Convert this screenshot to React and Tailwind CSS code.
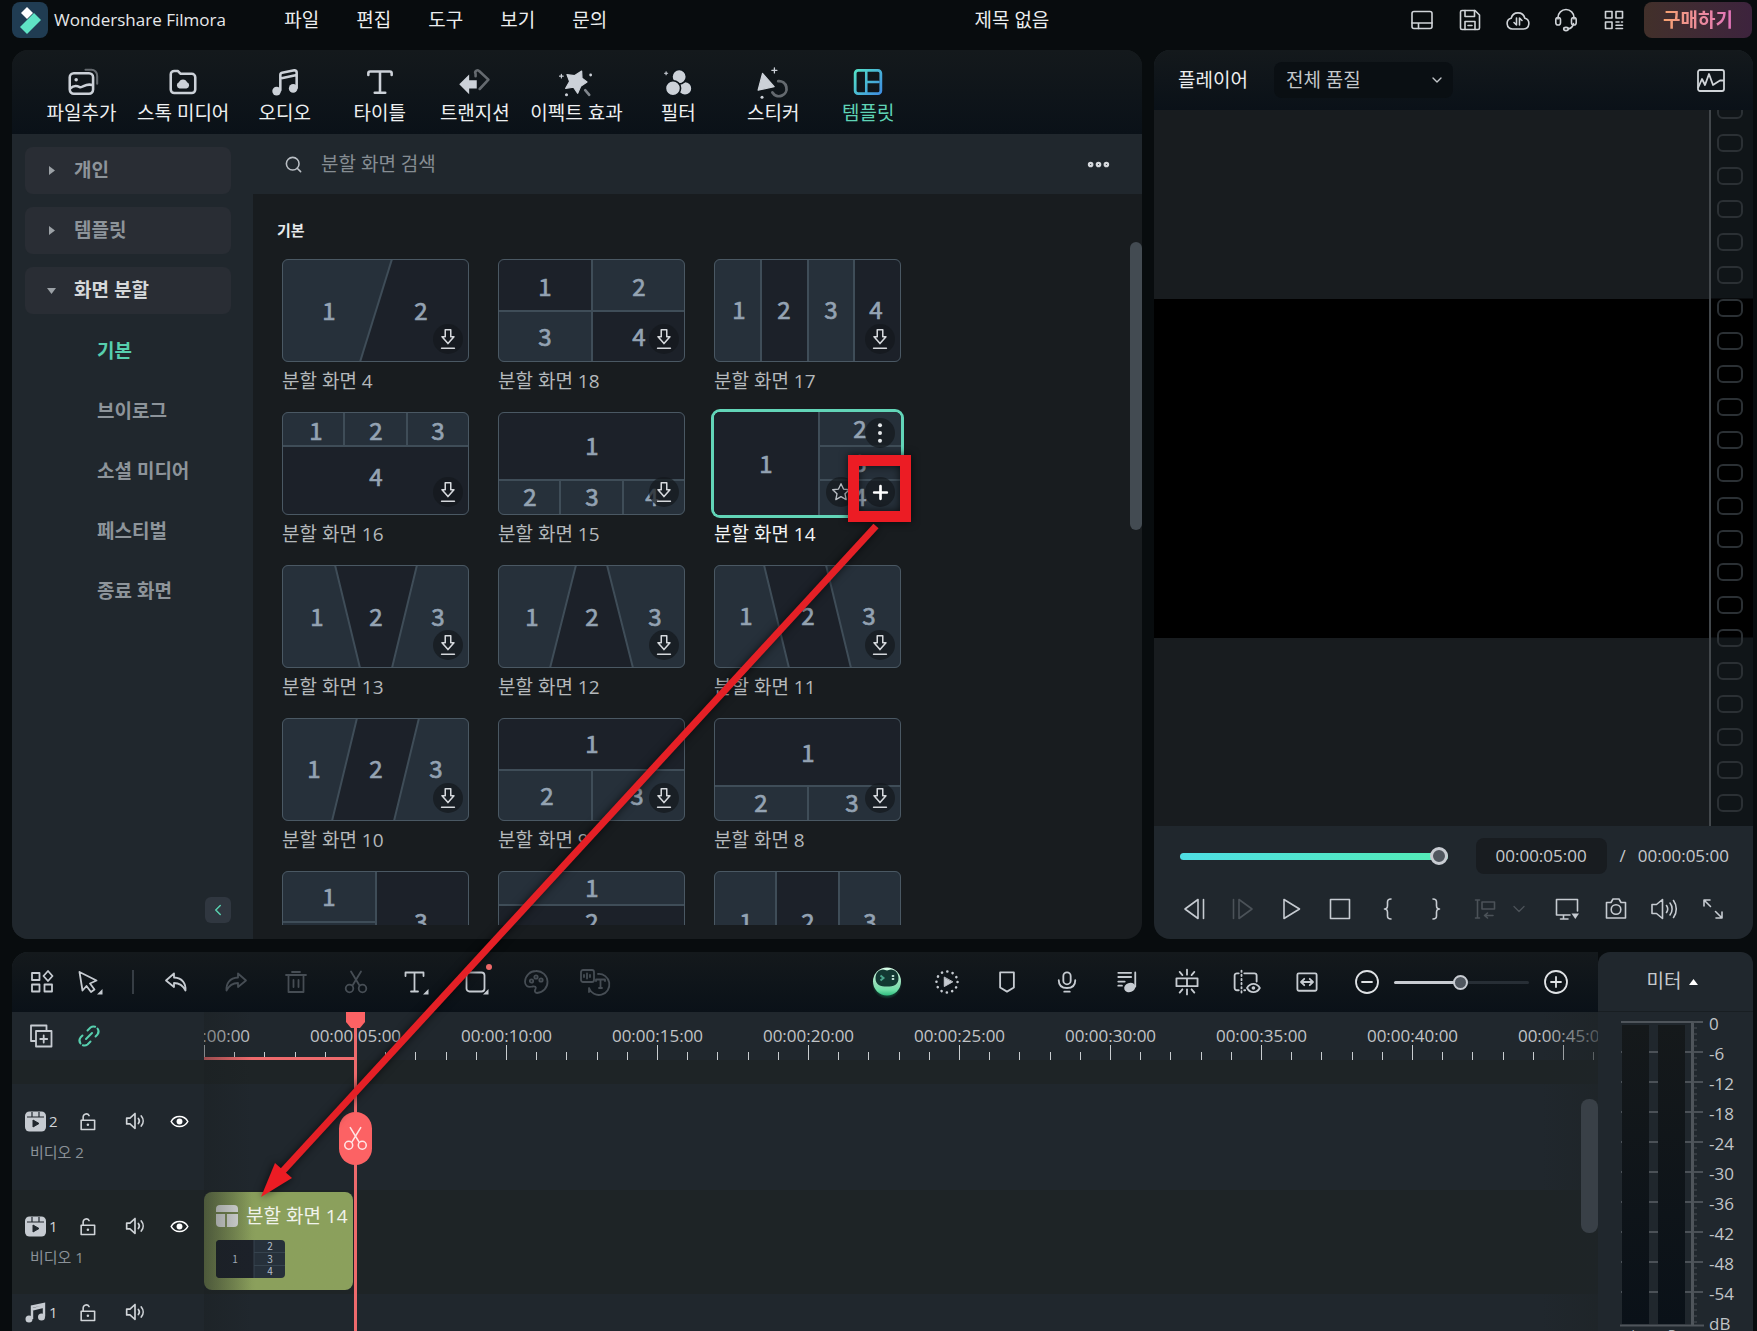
import { ChevronDown, ChevronLeft, Search, MoreHorizontal } from 'lucide-react';
import clsx from 'clsx';

const Icon = ({ size = 24, sw = 1.6, className, children }) => (
  <svg
    width={size}
    height={size}
    viewBox="0 0 24 24"
    fill="none"
    stroke="currentColor"
    strokeWidth={sw}
    strokeLinecap="round"
    strokeLinejoin="round"
    className={clsx('shrink-0', className)}
    aria-hidden="true"
  >
    {children}
  </svg>
);

const solid = { fill: 'currentColor', stroke: 'none' };

const MENU = ['파일', '편집', '도구', '보기', '문의'];

const HEADER_ICONS = [
  {
    label: '레이아웃',
    art: (
      <>
        <rect x="2" y="3.500" width="20" height="17" rx="2" />
        <path d="M2 15h20M8.500 15v5.500" />
      </>
    ),
  },
  {
    label: '저장',
    art: (
      <>
        <path d="M4 2.500h13l4.500 4.500v13a1.500 1.500 0 0 1-1.500 1.500H4A1.500 1.500 0 0 1 2.500 20V4A1.500 1.500 0 0 1 4 2.500z" />
        <path d="M7 2.500v6h9.500v-6M7 21.500v-8h10v8M10 17.500h4" />
      </>
    ),
  },
  {
    label: '클라우드',
    art: (
      <>
        <path d="M6.500 21a5.500 5.500 0 0 1-1.300-10.800 7 7 0 0 1 13.600 0A5.500 5.500 0 0 1 17.500 21z" />
        <path d="M10.500 10v7l-2.500-2.500M13.500 17v-7l2.500 2.500" />
      </>
    ),
  },
  {
    label: '고객 지원',
    art: (
      <>
        <path d="M4 11V9.500a8 8 0 0 1 16 0V11M19.500 15.500c-.6 3-2.500 5-5.500 5.500" />
        <rect x="1.800" y="9.500" width="4.700" height="7.500" rx="2.300" />
        <rect x="17.500" y="9.500" width="4.700" height="7.500" rx="2.300" />
        <ellipse cx="12" cy="21" rx="2.300" ry="1.600" />
      </>
    ),
  },
  {
    label: '앱',
    art: (
      <>
        <rect x="3.500" y="3.500" width="6.500" height="6.500" />
        <rect x="14" y="3.500" width="6.500" height="6.500" />
        <rect x="3.500" y="14" width="6.500" height="6.500" />
        <path d="M14 14h3M19.500 14h1M14 17.300h6.500M14 20.500h6.500" />
      </>
    ),
  },
];

const TABS = [
  {
    label: '파일추가',
    art: (
      <>
        <rect x="1.500" y="4.500" width="20" height="17.500" rx="3.500" />
        <circle cx="7" cy="10" r="1.500" {...solid} />
        <path d="M2 17.500c3-3 5.500-2.500 8-1.200s5-3.800 11-1.600" />
        <path d="M15 1.500h4.500A5 5 0 0 1 25 7v6.500" opacity=".45" strokeWidth="1.800" />
      </>
    ),
  },
  {
    label: '스톡 미디어',
    art: (
      <>
        <path d="M1.500 5.500a3 3 0 0 1 3-3h3L10 5h9.500a3 3 0 0 1 3 3v10.500a3 3 0 0 1-3 3h-15a3 3 0 0 1-3-3z" />
        <path d="M9 17.500a2.700 2.700 0 0 1-.5-5.200 3.700 3.700 0 0 1 7 0 2.700 2.700 0 0 1-.5 5.200z" {...solid} />
      </>
    ),
  },
  {
    label: '오디오',
    art: (
      <>
        <path d="M8 19V6a2 2 0 0 1 1.500-2L20 2a2 2 0 0 1 2 2v13M8 9l14-3" />
        <circle cx="4.800" cy="19.800" r="3.700" {...solid} />
        <circle cx="19" cy="17.500" r="3.700" {...solid} />
      </>
    ),
  },
  { label: '타이틀', art: <path d="M2 6V4.500A1.500 1.500 0 0 1 3.500 3h17A1.500 1.500 0 0 1 22 4.500V6M12 3v18M7.500 21.200h9" /> },
  {
    label: '트랜지션',
    art: (
      <>
        <path d="M-1.500 14 7 5.500v5h6.500v7H7v5z" {...solid} strokeLinejoin="round" />
        <path d="M12.500 7V5A2 2 0 0 1 16 3l7.500 7L16 18" opacity=".45" />
      </>
    ),
  },
  {
    label: '이펙트 효과',
    art: (
      <>
        <path d="m16 2.600.3 6.100 4.300 3.300-5.400 3.600-2.600 6.100L9 16.500l-6.700.9 3.300-5.900-2.200-5.800L10 6.500z" fill="currentColor" strokeWidth="1" />
        <path d="m19 19 3.500 4" opacity=".6" />
        <path d="M-3 7H.2M-1.400 5.400v3.200" strokeWidth="1" />
        <circle cx="23.700" cy="6" r="1.200" {...solid} />
        <circle cx="3" cy="23" r="1.300" {...solid} />
      </>
    ),
  },
  {
    label: '필터',
    art: (
      <>
        <g fill="currentColor" stroke="#0e151b" strokeWidth="1.400">
          <circle cx="18" cy="17.500" r="6" />
          <circle cx="13" cy="7.500" r="6.200" />
          <circle cx="7.700" cy="17.400" r="6.500" />
        </g>
        <path d="M.5 4.500h2.600M1.800 3.200v2.600" strokeWidth="1" />
      </>
    ),
  },
  {
    label: '스티커',
    art: (
      <>
        <path d="M3 4.600 13 16 -.8 19z" fill="currentColor" strokeWidth="1" />
        <path d="M16.500 11.200a6.500 6.500 0 1 1-5 9.800" opacity=".45" strokeWidth="2.400" />
        <path d="M11 2h4.400M13.200-.2v4.400" strokeWidth="1.100" />
        <circle cx="2.600" cy="25" r="1.300" {...solid} />
      </>
    ),
  },
  {
    label: '템플릿',
    active: true,
    art: (
      <g stroke="url(#tabGradient)">
        <defs>
          <linearGradient id="tabGradient" x1="0" y1="0" x2="24" y2="20" gradientUnits="userSpaceOnUse">
            <stop offset="0" stopColor="#55e5c5" />
            <stop offset="1" stopColor="#3f8fe0" />
          </linearGradient>
        </defs>
        <rect x="1" y="2" width="22" height="20" rx="2.500" strokeWidth="2.400" />
        <path d="M10.500 2v20M12 12h9" />
      </g>
    ),
  },
];

const FOLDERS = [
  { label: '개인' },
  { label: '템플릿' },
  { label: '화면 분할', open: true },
];

const CATEGORIES = ['기본', '브이로그', '소셜 미디어', '페스티벌', '종료 화면'];

// d: dark cells over the light base, l: divider lines, n: digit positions
const TEMPLATES = [
  { name: '분할 화면 4', d: 'M110 0H187V103H78z', l: 'M110 0L78 103', n: [[47, 52], [139, 52]] },
  { name: '분할 화면 18', d: 'M0 0H94V52H0zM94 52H187V103H94z', l: 'M94 0V103M0 52H187', n: [[47, 28], [141, 28], [47, 78], [141, 78]] },
  { name: '분할 화면 17', d: 'M47 0H94V103H47zM140 0H187V103H140z', l: 'M47 0V103M94 0V103M140 0V103', n: [[25, 51], [70, 51], [117, 51], [162, 51]] },
  { name: '분할 화면 16', d: 'M0 34H187V103H0z', l: 'M0 34H187M62 0V34M125 0V34', n: [[34, 19], [94, 19], [156, 19], [94, 65]] },
  { name: '분할 화면 15', d: 'M0 0H187V68H0z', l: 'M0 68H187M62 68V103M125 68V103', n: [[94, 34], [32, 85], [94, 85], [154, 85]] },
  { name: '분할 화면 14', selected: true, d: 'M0 0H105V103H0z', l: 'M105 0V103M105 34H187M105 68H187', n: [[52, 52], [146, 17], [146, 51], [146, 85]] },
  { name: '분할 화면 13', d: 'M53 0H135L110 103H78z', l: 'M53 0L78 103M135 0L110 103', n: [[35, 52], [94, 52], [156, 52]] },
  { name: '분할 화면 12', d: 'M78 0H109L135 103H52z', l: 'M78 0L52 103M109 0L135 103', n: [[34, 52], [94, 52], [157, 52]] },
  { name: '분할 화면 11', d: 'M50 0H112L137 103H75z', l: 'M50 0L75 103M112 0L137 103', n: [[32, 51], [94, 51], [155, 51]] },
  { name: '분할 화면 10', d: 'M75 0H137L112 103H50z', l: 'M75 0L50 103M137 0L112 103', n: [[32, 51], [94, 51], [154, 51]] },
  { name: '분할 화면 9', d: 'M0 0H187V52H0z', l: 'M0 52H187M94 52V103', n: [[94, 26], [49, 78], [139, 78]] },
  { name: '분할 화면 8', d: 'M0 0H187V68H0z', l: 'M0 68H187M94 68V103', n: [[94, 35], [47, 85], [138, 85]] },
  { name: '분할 화면 7', d: 'M94 0H187V103H94z', l: 'M94 0V103M0 51H94', n: [[47, 26], [47, 78], [139, 51]] },
  { name: '분할 화면 6', d: 'M0 34H187V68H0z', l: 'M0 34H187M0 68H187', n: [[94, 17], [94, 51], [94, 85]] },
  { name: '분할 화면 5', d: 'M62 0H125V103H62z', l: 'M62 0V103M125 0V103', n: [[32, 51], [94, 51], [156, 51]] },
];

const SplitArt = ({ item }) => (
  <svg viewBox="0 0 187 103" className="block h-full w-full" aria-hidden="true">
    <rect width="187" height="103" fill="#26303a" />
    <path d={item.d} fill="#1c2129" />
    <path d={item.l} stroke="#3f4d58" strokeWidth="2" fill="none" />
    {item.n.map(([x, y], i) => (
      <text
        key={i}
        x={x}
        y={y + 9}
        textAnchor="middle"
        fontSize="24"
        fill="#94a3b3"
        stroke="#94a3b3"
        strokeWidth=".7"
        fontFamily="'Noto Sans CJK KR', sans-serif"
      >
        {i + 1}
      </text>
    ))}
  </svg>
);

const badge = 'absolute flex size-[30px] items-center justify-center rounded-full bg-[#14181d]/70';

const TemplateCard = ({ item }) => (
  <div>
    <div
      className={clsx(
        'relative h-[103px] overflow-hidden rounded-md',
        item.selected ? 'ring-3 ring-[#62d5b8]' : 'outline -outline-offset-1 outline-[#4a5863]',
      )}
    >
      <SplitArt item={item} />
      {item.selected ? (
        <>
          <button aria-label="더보기" className={clsx(badge, 'top-1.5 right-1.5 text-[#e4e7ea]')}>
            <Icon size={22}>
              <circle cx="12" cy="3.500" r="2.200" {...solid} />
              <circle cx="12" cy="12" r="2.200" {...solid} />
              <circle cx="12" cy="20.500" r="2.200" {...solid} />
            </Icon>
          </button>
          <button aria-label="즐겨찾기" className={clsx(badge, 'right-[45px] bottom-2 text-[#b9bec4]')}>
            <Icon size={20}>
              <path d="m12 2 3 6.500 7 .8-5.200 4.800 1.400 7L12 17.600l-6.200 3.500 1.400-7L2 9.300l7-.8z" />
            </Icon>
          </button>
          <button aria-label="추가" className={clsx(badge, 'right-1.5 bottom-2 text-white')}>
            <Icon size={19} sw={3.4}>
              <path d="M12 4v16M4 12h16" />
            </Icon>
          </button>
        </>
      ) : (
        <button aria-label="다운로드" className={clsx(badge, 'right-1.5 bottom-2 text-[#d5d8dc]')}>
          <Icon size={22} sw={1.7}>
            <path d="M9 2h6v7.500h3.500L12 17 5.500 9.500H9zM5 22h14" />
          </Icon>
        </button>
      )}
    </div>
    <p className={clsx('leading-[38px] whitespace-nowrap', item.selected ? 'text-[#f3f4f5]' : 'text-[#b4b8bb]')}>{item.name}</p>
  </div>
);

const TitleBar = () => (
  <header className="flex h-[50px] items-start pr-[5px] pl-3">
    <div className="flex h-10 items-center">
      <svg width="36" height="36" viewBox="0 0 36 36" className="mr-1.5" aria-hidden="true">
        <rect width="36" height="36" rx="8" fill="#203c52" />
        <path d="m9 11 6-6 6 6-6 6z" fill="#fff" />
        <path d="m22 11 7 7-14 14-7-7z" fill="#5fe3c4" />
      </svg>
      <span className="text-[17px] text-[#e6e8ea]">Wondershare Filmora</span>
      <nav className="ml-10 flex">
        {MENU.map((m) => (
          <button key={m} className="w-[72px] text-[#eceeef]">
            {m}
          </button>
        ))}
      </nav>
    </div>
    <h1 className="flex-1 text-center leading-10 text-[#eceeef]">제목 없음</h1>
    <div className="flex h-10 items-center text-[#d0d4d8]">
      {HEADER_ICONS.map(({ label, art }) => (
        <button key={label} aria-label={label} className="flex w-12 justify-center">
          <Icon>{art}</Icon>
        </button>
      ))}
      <button className="ml-1.5 h-9 w-[108px] rounded-lg bg-linear-to-r from-[#42302a] to-[#3d233d] font-bold">
        <span className="bg-linear-to-r from-[#f7a26e] to-[#e273bb] bg-clip-text text-transparent">구매하기</span>
      </button>
    </div>
  </header>
);

const MediaPanel = () => (
  <section className="flex min-h-0 min-w-0 flex-col overflow-hidden rounded-2xl bg-[#181c1f]">
    <div role="tablist" className="flex h-[84px] shrink-0 bg-linear-to-b from-[#14191c] to-[#0a1118] pl-[22px]">
      {TABS.map(({ label, art, active }) => (
        <button
          key={label}
          role="tab"
          aria-selected={!!active}
          className={clsx('flex min-w-[95px] flex-col items-center px-2 pt-[18px]', active ? 'text-[#5fd3b5]' : 'text-[#eef0f1]')}
        >
          <Icon size={28} sw={2.2} className="overflow-visible text-[#ccd1d8]">
            {art}
          </Icon>
          <span className="leading-[34px] whitespace-nowrap">{label}</span>
        </button>
      ))}
    </div>

    <div className="flex min-h-0 flex-1">
      <aside className="flex w-[241px] shrink-0 flex-col bg-[#20272d] pt-[13px] pr-[22px] pl-[13px] font-bold text-[#8d949a]">
        <div className="flex flex-col gap-[13px]">
          {FOLDERS.map(({ label, open }) => (
            <button
              key={label}
              aria-expanded={!!open}
              className={clsx('flex h-[47px] items-center gap-[18px] rounded-lg bg-[#292d34] pl-[22px]', open && 'text-[#d5d8da]')}
            >
              <svg width="9" height="9" viewBox="0 0 9 9" className={clsx('text-[#9ba1a6]', open && 'rotate-90')} aria-hidden="true">
                <path d="M2 0l6 4.500L2 9z" fill="currentColor" />
              </svg>
              {label}
            </button>
          ))}
        </div>
        <ul className="mt-[7px] pl-[72px]">
          {CATEGORIES.map((c, i) => (
            <li key={c}>
              <button className={clsx('h-[60px] whitespace-nowrap', i === 0 && 'text-[#57cfae]')}>{c}</button>
            </li>
          ))}
        </ul>
        <button aria-label="사이드바 접기" className="mt-auto mb-4 flex size-[26px] items-center justify-center self-end rounded-md bg-[#303740] text-[#57cfae]">
          <ChevronLeft size={18} />
        </button>
      </aside>

      <div className="flex min-w-0 flex-1 flex-col">
        <div className="flex h-[60px] shrink-0 items-center bg-[#20272d] pr-[30px] pl-[31px]">
          <Search size={19} className="text-[#b9bec4]" />
          <input
            type="search"
            aria-label="검색"
            placeholder="분할 화면 검색"
            className="ml-[18px] flex-1 bg-transparent outline-none placeholder:text-[#868d93]"
          />
          <button aria-label="옵션" className="text-[#d5d8dc]">
            <MoreHorizontal size={27} strokeWidth={3} />
          </button>
        </div>
        <div className="relative mb-3.5 min-h-0 flex-1 overflow-hidden pt-6">
          <h2 className="mb-[17px] pl-6 text-[15px] leading-6 font-bold text-[#e8eaeb]">기본</h2>
          <div className="grid grid-cols-[repeat(3,187px)] gap-x-[29px] gap-y-3 pl-[29px]">
            {TEMPLATES.map((t) => (
              <TemplateCard key={t.name} item={t} />
            ))}
          </div>
          <div className="absolute top-12 right-0 h-[288px] w-3 rounded-full bg-[#434b52]" />
        </div>
      </div>
    </div>
  </section>
);

const PLAYER_ICONS = [
  { label: '이전 프레임', art: <path d="M16 2.500v19L3 12zM21.500 2.500v19" /> },
  { label: '다음 프레임', dim: true, art: <path d="M8 2.500v19L21 12zM2.500 2.500v19" /> },
  { label: '재생', art: <path d="M5 2.500v19L20.500 12z" /> },
  { label: '정지', art: <path d="M2.500 2.500h19v19h-19z" /> },
  { label: '시작 표시', art: <path d="M15 2c-2.500 0-3.500 1-3.500 3v3.500c0 2-1 3.500-3 3.500 2 0 3 1.500 3 3.500V19c0 2 1 3 3.500 3" /> },
  { label: '종료 표시', art: <path d="M9 2c2.500 0 3.500 1 3.500 3v3.500c0 2 1 3.500 3 3.500-2 0-3 1.500-3 3.500V19c0 2-1 3-3.500 3" /> },
  { label: '렌더', dim: true, art: <path d="M2.500 3h4M4.500 3v18M2.500 21h4M9 5h12.500v7H9zM20 18.500h-8M14.500 16l-3 2.500 3 2.500" /> },
  { label: '렌더 옵션', dim: true, narrow: true, art: <path d="m6 9 6 6 6-6" /> },
  {
    label: '화면',
    art: (
      <>
        <path d="M15 18H1.500V2.500h21V14M8.500 18v4M5.500 22H13" />
        <path d="M16.500 16.500h7.500l-3.700 5.500z" {...solid} />
      </>
    ),
  },
  {
    label: '스냅샷',
    art: (
      <>
        <path d="M2.500 5.500h4.500l2-3.500h6l2 3.500h4.500V21h-19z" />
        <circle cx="12" cy="12.500" r="4.800" />
      </>
    ),
  },
  { label: '볼륨', art: <path d="M0 7.500h4.500l6-5v19l-6-5H0zM14.500 8.500c1.400 2 1.400 5 0 7M18 6c2.800 3.500 2.800 8.500 0 12M21.500 3.500c3.700 5 3.700 12 0 17" /> },
  { label: '전체 화면', art: <path d="M3 9V3h6M3.500 3.500 9.500 9.500M21 15v6h-6M20.500 20.500l-6-6" /> },
];

const HOLES = Array.from({ length: 22 }, (_, i) => i);

const Player = () => (
  <section className="flex min-h-0 min-w-0 flex-col overflow-hidden rounded-2xl bg-[#20272d]">
    <div className="flex h-[60px] shrink-0 items-center bg-linear-to-b from-[#14191c] to-[#0a1118] pr-7 pl-6">
      <h2 className="text-[#eceeef]">플레이어</h2>
      <div className="relative ml-[26px] w-[179px]">
        <select aria-label="재생 품질" className="h-9 w-full appearance-none rounded-lg bg-[#0a0f13] pl-3 text-[#c3c7ca]">
          <option>전체 품질</option>
        </select>
        <ChevronDown size={16} className="pointer-events-none absolute top-2.5 right-2 text-[#c3c7ca]" />
      </div>
      <button aria-label="비디오 스코프" className="ml-auto text-[#d0d4d8]">
        <svg width="28" height="23" viewBox="0 0 28 23" fill="none" stroke="currentColor" strokeWidth="1.800" strokeLinejoin="round" aria-hidden="true">
          <rect x="1" y="1" width="26" height="21" rx="2" />
          <path d="M1 19l4-9 3 6 4-11 4 11 3-2 4-2.500h4" />
        </svg>
      </button>
    </div>

    <div className="flex min-h-0 flex-1 bg-[#181c1f]">
      <div className="flex flex-1 flex-col justify-center border-r-2 border-[#42474b]">
        <div className="h-[339px] bg-black" />
      </div>
      <div className="relative w-[42px] overflow-hidden bg-[#101518]">
        <div className="absolute inset-x-0 top-1/2 h-[339px] -translate-y-1/2 bg-black" />
        <div className="absolute inset-x-0 -top-[9px] flex flex-col gap-[15px] pl-1.5">
          {HOLES.map((i) => (
            <div key={i} className="h-[18px] w-[26px] shrink-0 rounded-md border-2 border-[#2b3034]" />
          ))}
        </div>
      </div>
    </div>

    <div className="shrink-0 pb-[7px]">
      <div className="flex h-[60px] items-center pr-6 pl-[26px] text-[17px] text-[#c6cacd]">
        <input
          type="range"
          aria-label="재생 위치"
          defaultValue={100}
          className="h-[7px] min-w-0 flex-1 appearance-none rounded-full bg-linear-to-r from-[#4fdfe4] to-[#54ecb4] [&::-webkit-slider-thumb]:size-[18px] [&::-webkit-slider-thumb]:appearance-none [&::-webkit-slider-thumb]:rounded-full [&::-webkit-slider-thumb]:border-3 [&::-webkit-slider-thumb]:border-[#c8ccd2] [&::-webkit-slider-thumb]:bg-[#50575f]"
        />
        <span className="ml-7 h-9 w-[131px] rounded-lg bg-[#181c20] text-center leading-9">00:00:05:00</span>
        <span className="ml-[13px]">/</span>
        <span className="ml-3">00:00:05:00</span>
      </div>
      <div className="flex h-[46px] items-center px-4">
        {PLAYER_ICONS.map(({ label, art, dim, narrow }) => (
          <button
            key={label}
            aria-label={label}
            className={clsx('flex', narrow ? 'w-[34px] justify-start' : 'flex-1 justify-center', dim ? 'text-[#4b5258]' : 'text-[#c6cbd1]')}
          >
            <Icon size={narrow ? 20 : 24} className="overflow-visible">
              {art}
            </Icon>
          </button>
        ))}
      </div>
    </div>
  </section>
);

const scissors = (
  <>
    <path d="M7 1.500 15.500 15.500M17 1.500 8.500 15.500" />
    <circle cx="5.500" cy="18.500" r="3.800" />
    <circle cx="18.500" cy="18.500" r="3.800" />
  </>
);

const cornerMark = <path d="M24.500 19v5.500H19z" {...solid} />;

const EDIT_TOOLS = [
  { label: '실행 취소', art: <path d="M10 3.500 2 10.500l8 6.500v-4c5 0 8.500 1.500 11.500 7.500.5-7-3-12.500-11.500-13z" /> },
  { label: '다시 실행', dim: true, art: <path d="m14 3.500 8 7-8 6.500v-4c-5 0-8.500 1.500-11.500 7.500-.5-7 3-12.500 11.500-13z" /> },
  { label: '삭제', dim: true, art: <path d="M2 5h20M8 2h8M4.500 5v17h15V5M9.500 10v7M14.500 10v7" /> },
  { label: '자르기', dim: true, art: scissors },
  {
    label: '텍스트',
    art: (
      <>
        <path d="M1.500 6V2.500h18V6M10.500 2.500v19M7 21.500h7" />
        {cornerMark}
      </>
    ),
  },
  {
    label: '도형',
    dot: true,
    art: (
      <>
        <rect x="2.500" y="2.500" width="18" height="19" rx="3" />
        {cornerMark}
      </>
    ),
  },
  {
    label: '색상',
    dim: true,
    art: (
      <>
        <path d="M12 1a11 11 0 1 1 1 22c-2.500 0-2.500-2.500-1.500-4 1-2-.5-3-3-2.500C3 18 1 15 1 11.500A11 11 0 0 1 12 1z" />
        <circle cx="7.500" cy="11" r="1.700" />
        <circle cx="12" cy="7" r="1.700" />
        <circle cx="17" cy="10" r="1.700" />
      </>
    ),
  },
  {
    label: '음성 텍스트 변환',
    dim: true,
    art: (
      <>
        <rect x="-3" y="0" width="13" height="12" rx="2" />
        <path d="M0 5v2M3 3.500v5M6 5v2M14 4a10.500 10.500 0 1 1-9 14v4M12 11v-1.500h9V11M16.500 9.500V18M15 18h3" />
      </>
    ),
  },
];

const MEDIA_TOOLS = [
  {
    label: '동적 효과',
    art: (
      <>
        <circle cx="12" cy="12" r="11.500" strokeWidth="2.800" strokeDasharray="0.100 5.920" />
        <path d="M9 7v10l9-5z" fill="currentColor" strokeWidth="1" />
      </>
    ),
  },
  { label: '마커', art: <path d="M4.500 1.500h15V18L12 22.500 4.500 18z" /> },
  {
    label: '녹음',
    art: (
      <>
        <rect x="8" y="1.500" width="8" height="13" rx="4" />
        <path d="M3 10c0 5.500 3.500 8.500 9 8.500s9-3 9-8.500M9 22.500h6" />
      </>
    ),
  },
  {
    label: '오디오 믹서',
    art: (
      <>
        <path d="M2.500 2h14M2.500 6.500h14M2.500 11.500h7M2.500 16h4M21 1.500V17" />
        <ellipse cx="15" cy="18" rx="6.200" ry="5" transform="rotate(-20 15 18)" {...solid} />
      </>
    ),
  },
  { label: '자동 정렬', art: <path d="M.5 8h23v8.500H.5zM12 8v8.500M12-1.500v5.500M12 20v5.500M4 1l3 3.500M20 1l-3 3.500M4 23.500 7 20M20 23.500 17 20" /> },
  {
    label: '미리보기 렌더',
    art: (
      <>
        <path d="M3 2.500H1a2.500 2.500 0 0 0-2.500 2.500v13.500A2.500 2.500 0 0 0 1 21h2M9 2.500h11a2.500 2.500 0 0 1 2.500 2.500v6.500M9 21h1" />
        <path d="M6-.5v25" strokeDasharray="1.500 3" />
        <path d="M12 18.500c3.500-6 10.500-6 14 0-3.500 6-10.500 6-14 0z" />
        <circle cx="19" cy="18.500" r="2" {...solid} />
      </>
    ),
  },
  {
    label: '타임라인 맞춤',
    art: (
      <>
        <rect x="1.500" y="2.500" width="21" height="19" rx="1.500" />
        <path d="M6 12h12M9 8.500 5.500 12 9 15.500M15 8.500l3.500 3.500-3.500 3.500" />
      </>
    ),
  },
];

const Robot = () => (
  <svg width="30" height="34" viewBox="0 0 30 34" aria-hidden="true">
    <defs>
      <radialGradient id="glow" cx=".5" cy=".5" r=".5">
        <stop offset=".7" stopColor="#1c8a5c" stopOpacity=".6" />
        <stop offset="1" stopColor="#1c8a5c" stopOpacity="0" />
      </radialGradient>
      <linearGradient id="shell" x1="0" y1="0" x2="0" y2="1">
        <stop offset="0" stopColor="#d9ffe9" />
        <stop offset=".6" stopColor="#8fdcb4" />
        <stop offset=".8" stopColor="#6fe0a8" />
        <stop offset="1" stopColor="#2fbd7f" />
      </linearGradient>
    </defs>
    <circle cx="15" cy="19" r="15" fill="url(#glow)" />
    <circle cx="15" cy="16.500" r="14" fill="url(#shell)" />
    <path d="M3.500 13C3.500 8 7 4.500 11 4.500c2 0 2.500 1 4 1s2-1 4-1c4 0 7.500 3.500 7.500 8.500 0 7-5 8.500-11.500 8.500S3.500 20 3.500 13z" fill="#123832" />
    <path d="M8.500 10.500l3 2.500-3 2.500" stroke="#49a38b" strokeWidth="2" fill="none" />
    <path d="M21 10v5.500" stroke="#b8dccf" strokeWidth="2.400" strokeDasharray="2 1" />
  </svg>
);

const lockArt = (
  <>
    <path d="M4 10.500h17V22H4zM6.500 10.500V6A4 4 0 0 1 14 4.500" />
    <circle cx="12.500" cy="16" r="1.600" {...solid} />
  </>
);
const soundArt = <path d="M2 8.500h4l6-5.500v18l-6-5.500H2zM16 9c1.500 1.800 1.500 4.200 0 6M19.500 6c3 3.500 3 8.500 0 12" />;
const eyeArt = (
  <>
    <path d="M1.500 12C6 3.500 18 3.500 22.500 12 18 20.500 6 20.500 1.500 12z" />
    <circle cx="12" cy="12" r="3.700" {...solid} />
  </>
);

const TrackHeader = ({ index, name, audio }) => (
  <>
    <div className="flex h-6 items-center pl-[13px] text-[#d0d4d8]">
      <span className="flex w-[50px] items-center gap-[3px]">
        <svg width="21" height="21" viewBox="0 0 21 21" aria-hidden="true">
          {audio ? (
            <>
              <path d="M7 17V4.500L19 2v12.500M7 7.500l12-3" stroke="#c6cbd1" strokeWidth="2.400" fill="none" />
              <circle cx="4" cy="17" r="3.500" fill="#c6cbd1" />
              <circle cx="16.500" cy="15" r="3.500" fill="#c6cbd1" />
            </>
          ) : (
            <>
              <rect y=".5" width="21" height="20" rx="4.500" fill="#c6cbd1" />
              <path d="M2 6h17M7 1v5M14 1v5" stroke="#20272d" strokeWidth="1.200" />
              <path d="M8 9v7l6-3.500z" fill="#20272d" stroke="#20272d" strokeLinejoin="round" />
            </>
          )}
        </svg>
        <span className="text-[15px]">{index}</span>
      </span>
      <button aria-label="트랙 잠금" className="flex w-6 justify-center">
        <Icon size={19} sw={2}>{lockArt}</Icon>
      </button>
      <button aria-label="트랙 음소거" className="ml-6 flex w-6 justify-center">
        <Icon size={20} sw={2}>{soundArt}</Icon>
      </button>
      {!audio && (
        <button aria-label="트랙 숨기기" className="ml-5 flex w-6 justify-center text-white">
          <Icon size={19} sw={2}>{eyeArt}</Icon>
        </button>
      )}
    </div>
    {name && <p className="mt-[7px] pl-[18px] text-[15px] leading-6 text-[#8b9298]">{name}</p>}
  </>
);

const TIMES = ['00', '05', '10', '15', '20', '25', '30', '35', '40', '45'];

const Ruler = () => (
  <div className="relative h-12 overflow-hidden bg-[#20272d]">
    <div className="-ml-[75px] flex pt-3 text-[17px] leading-6 text-[#c0c4c7]">
      {TIMES.map((t) => (
        <span key={t} className="w-[151px] shrink-0 text-center">{`00:00:${t}:00`}</span>
      ))}
    </div>
    <div className="absolute bottom-0 left-0 flex h-[15px]">
      {TIMES.map((t) => (
        <div key={t} className="grid w-[151px] shrink-0 grid-cols-5 items-end">
          <i className="h-[15px] border-l border-[#c9cdd0]" />
          <i className="h-2 border-l border-[#c9cdd0]" />
          <i className="h-2 border-l border-[#c9cdd0]" />
          <i className="h-2 border-l border-[#c9cdd0]" />
          <i className="h-2 border-l border-[#c9cdd0]" />
        </div>
      ))}
    </div>
    <div className="absolute bottom-0 left-0 h-[3px] w-[151px] bg-[#ee6a6c]" />
  </div>
);

const Clip = () => (
  <div className="mt-0.5 h-[98px] w-[149px] overflow-hidden rounded-lg bg-linear-to-r from-[#6f7f4c] to-[#8ba05c] to-35% pt-3 pl-3">
    <div className="flex h-6 items-center gap-2">
      <svg width="22" height="22" viewBox="0 0 22 22" className="shrink-0" aria-hidden="true">
        <rect width="22" height="22" rx="4" fill="#dcdedb" />
        <path d="M0 8h22M10 8v14" stroke="#76874f" strokeWidth="1.800" />
      </svg>
      <span className="whitespace-nowrap text-[#f1f3ec]">분할 화면 14</span>
    </div>
    <svg width="69" height="38" viewBox="0 0 69 38" className="mt-3 rounded" aria-hidden="true">
      <rect width="69" height="38" fill="#26303a" />
      <path d="M0 0h38v38H0z" fill="#1c2129" />
      <path d="M38 0v38M38 12.500h31M38 25.500h31" stroke="#36434e" />
      <g fill="#b4bfca" fontSize="10" textAnchor="middle" fontFamily="'Noto Sans CJK KR', sans-serif">
        <text x="19" y="23">1</text>
        <text x="54" y="10">2</text>
        <text x="54" y="23">3</text>
        <text x="54" y="35">4</text>
      </g>
    </svg>
  </div>
);

const Timeline = () => (
  <div className="flex min-w-0 flex-1 flex-col overflow-hidden rounded-tl-2xl bg-[#20272d]">
    <div className="flex h-[60px] shrink-0 items-center bg-linear-to-b from-[#14191c] to-[#0a1118] pr-[30px] pl-[18px] text-[#c6cbd1]">
      <button aria-label="레이아웃 설정" className="mr-6">
        <Icon sw={1.8}>
          <path d="M2 3h7.500v7H2zM2 14.500h7.500v7H2zM14.500 14.500H22v7h-7.500zM18 1l4.500 5L18 11l-4.500-5z" />
        </Icon>
      </button>
      <button aria-label="선택 도구">
        <Icon sw={1.8} className="overflow-visible">
          <path d="m1.500 2 17 8.500-6.500 3 4.500 6-3.500 2.500-4.500-6-4 4.500z" />
          {cornerMark}
        </Icon>
      </button>
      <span className="mr-3 ml-[30px] h-6 w-0.5 bg-[#363d44]" />
      {EDIT_TOOLS.map(({ label, art, dim, dot }) => (
        <button key={label} aria-label={label} className={clsx('relative flex w-[60px] justify-center', dim && 'text-[#464d54]')}>
          <Icon sw={1.8} className="overflow-visible">
            {art}
          </Icon>
          {dot && <span className="absolute -top-1.5 right-3.5 size-1.5 rounded-full bg-[#f06a6a]" />}
        </button>
      ))}
      <div className="ml-auto flex items-center">
        <button aria-label="AI 도우미" className="flex w-[60px] justify-center">
          <Robot />
        </button>
        {MEDIA_TOOLS.map(({ label, art }) => (
          <button key={label} aria-label={label} className="flex w-[60px] justify-center">
            <Icon size={22} sw={2} className="overflow-visible">
              {art}
            </Icon>
          </button>
        ))}
        <div className="ml-[18px] flex items-center gap-[15px] text-[#dfe2e5]">
          <button aria-label="축소">
            <Icon sw={1.8}>
              <circle cx="12" cy="12" r="11" />
              <path d="M7 12h10" />
            </Icon>
          </button>
          <input
            type="range"
            aria-label="타임라인 확대"
            defaultValue={49}
            className="h-[3px] w-[135px] appearance-none rounded-full bg-linear-to-r from-[#c8ccd2] from-50% to-[#272e35] to-50% [&::-webkit-slider-thumb]:size-[15px] [&::-webkit-slider-thumb]:appearance-none [&::-webkit-slider-thumb]:rounded-full [&::-webkit-slider-thumb]:border-2 [&::-webkit-slider-thumb]:border-[#c8ccd2] [&::-webkit-slider-thumb]:bg-[#50575f]"
          />
          <button aria-label="확대">
            <Icon sw={1.8}>
              <circle cx="12" cy="12" r="11" />
              <path d="M7 12h10M12 7v10" />
            </Icon>
          </button>
        </div>
      </div>
    </div>

    <div className="flex min-h-0 flex-1 overflow-hidden">
      <div className="w-48 shrink-0">
        <div className="flex h-12 items-center gap-6 pl-[17px] text-[#c6cbd1]">
          <button aria-label="트랙 추가">
            <Icon size={24} sw={1.8}>
              <path d="M7 7h15.500v15.500H7zM7 17H2V1.500h15.500V7M14.700 11.500v7M11.200 15h7" />
            </Icon>
          </button>
          <button aria-label="연결" className="text-[#57cfae]">
            <Icon sw={2}>
              <path d="m9 15 6-6M10.500 6.500l3-3a5 5 0 0 1 7 7l-3 3M13.500 17.500l-3 3a5 5 0 0 1-7-7l3-3" strokeDasharray="9 3" />
            </Icon>
          </button>
        </div>
        <div className="h-6 bg-[#1e2426]" />
        <div className="h-[106px] pt-[25px]">
          <TrackHeader index={2} name="비디오 2" />
        </div>
        <div className="h-[104px] bg-[#1e2426] pt-6">
          <TrackHeader index={1} name="비디오 1" />
        </div>
        <div className="pt-1.5">
          <TrackHeader index={1} audio />
        </div>
      </div>

      <div className="relative min-w-0 flex-1 overflow-hidden">
        <Ruler />
        <div className="h-6 bg-[#1e2426]" />
        <div className="h-[106px] bg-[#20272d]" />
        <div className="flex h-[104px] bg-[#1e2426]">
          <Clip />
        </div>
        <div className="pointer-events-none absolute inset-y-0 left-0 w-12 bg-linear-to-r from-[#1a1f21]/40 to-transparent" />
        <div className="pointer-events-none absolute inset-y-0 right-0 w-14 bg-linear-to-l from-[#1e2427]/70 to-transparent" />
        <div className="absolute top-[87px] right-0 h-[134px] w-[17px] rounded-lg bg-[#394047]" />

        {/* playhead */}
        <div className="absolute inset-y-0 left-[142px] flex w-[19px] flex-col items-center text-white">
          <svg width="19" height="16" viewBox="0 0 19 16" className="shrink-0" aria-hidden="true">
            <path d="M0 0h19v10l-5 6H5l-5-6z" fill="#fc6264" />
          </svg>
          <div className="w-[3px] flex-1 bg-[#ee6a6c]" />
          <button aria-label="클립 분할" className="absolute top-[100px] flex h-[53px] w-[33px] items-center justify-center rounded-full bg-[#fc6264]">
            <Icon size={25} sw={1.5} className="text-[#ffe5e5]">
              {scissors}
            </Icon>
          </button>
        </div>
      </div>
    </div>
  </div>
);

const LEVELS = ['0', '-6', '-12', '-18', '-24', '-30', '-36', '-42', '-48', '-54', 'dB'];
const SCALE = Array.from({ length: 51 }, (_, i) => i);

const Meter = () => (
  <aside className="flex w-[155px] shrink-0 flex-col overflow-hidden rounded-t-xl bg-[#20272d]">
    <button className="flex h-[60px] shrink-0 items-center justify-center gap-2 border-b border-[#181e22] pr-1.5 text-[#c6cacd]">
      미터
      <svg width="9" height="6" viewBox="0 0 9 6" aria-hidden="true">
        <path d="M4.500 0 9 6H0z" fill="#fff" />
      </svg>
    </button>
    <div className="flex min-h-0 flex-1 overflow-hidden pl-[22px]">
      <svg width="84" height="330" viewBox="0 0 84 330" className="shrink-0" aria-hidden="true">
        <defs>
          <linearGradient id="bar" x1="0" y1="0" x2="0" y2="1">
            <stop offset="0" stopColor="#15191b" />
            <stop offset="1" stopColor="#0a1118" />
          </linearGradient>
        </defs>
        {LEVELS.slice(1, 10).map((l, i) => (
          <path key={l} d={`M1 ${40 + i * 30}H83`} stroke="#4b5157" strokeWidth="2" />
        ))}
        <rect x="2" y="13" width="27" height="299" fill="url(#bar)" />
        <rect x="38" y="13" width="27" height="299" fill="url(#bar)" />
        <path d="M1 10h82M0 313.500h84" stroke="#4f555b" strokeWidth="2" />
        <path d="M72.500 10v303" stroke="#4f555b" strokeWidth="3" />
        {SCALE.map((i) => (
          <path key={i} d={`M73 ${10 + i * 6}h4`} stroke="#4b5157" />
        ))}
        <g fill="#a9afb4" fontSize="14" textAnchor="middle" fontFamily="'Open Sans', sans-serif">
          <text x="15" y="328">L</text>
          <text x="52" y="328">R</text>
        </g>
      </svg>
      <ul className="ml-[5px] flex flex-col gap-1.5 text-[17px] leading-6 text-[#c0c4c7]">
        {LEVELS.map((l) => (
          <li key={l}>{l}</li>
        ))}
      </ul>
    </div>
  </aside>
);

// Red call-out: frame round the add button, arrow down to the clip
const Callout = () => (
  <svg
    width="1000"
    height="1300"
    viewBox="0 0 1000 1300"
    className="pointer-events-none absolute top-0 left-0 drop-shadow-[0_0_4px_rgba(0,0,0,0.7)]"
    aria-hidden="true"
  >
    <rect x="853.500" y="460.500" width="52" height="56" fill="none" stroke="#ec1c24" strokeWidth="11" />
    <path d="M876 526 282 1172" stroke="#e52026" strokeWidth="7" />
    <path d="m261 1197 14-34 17 15z" fill="#ec1c24" />
  </svg>
);

const App = () => (
  <div className="relative flex h-screen flex-col overflow-hidden bg-[#080c0e] font-['Open_Sans','Noto_Sans_CJK_KR',sans-serif] text-[19px]">
    <TitleBar />
    <main className="grid min-h-0 flex-1 grid-cols-1 grid-rows-[889fr_379fr] gap-[13px] pr-1 pl-3">
      <div className="grid min-h-0 grid-cols-[1130fr_599fr] gap-3">
        <MediaPanel />
        <Player />
      </div>
      <div className="flex min-h-0">
        <Timeline />
        <Meter />
      </div>
    </main>
    <Callout />
  </div>
);

export default App;
